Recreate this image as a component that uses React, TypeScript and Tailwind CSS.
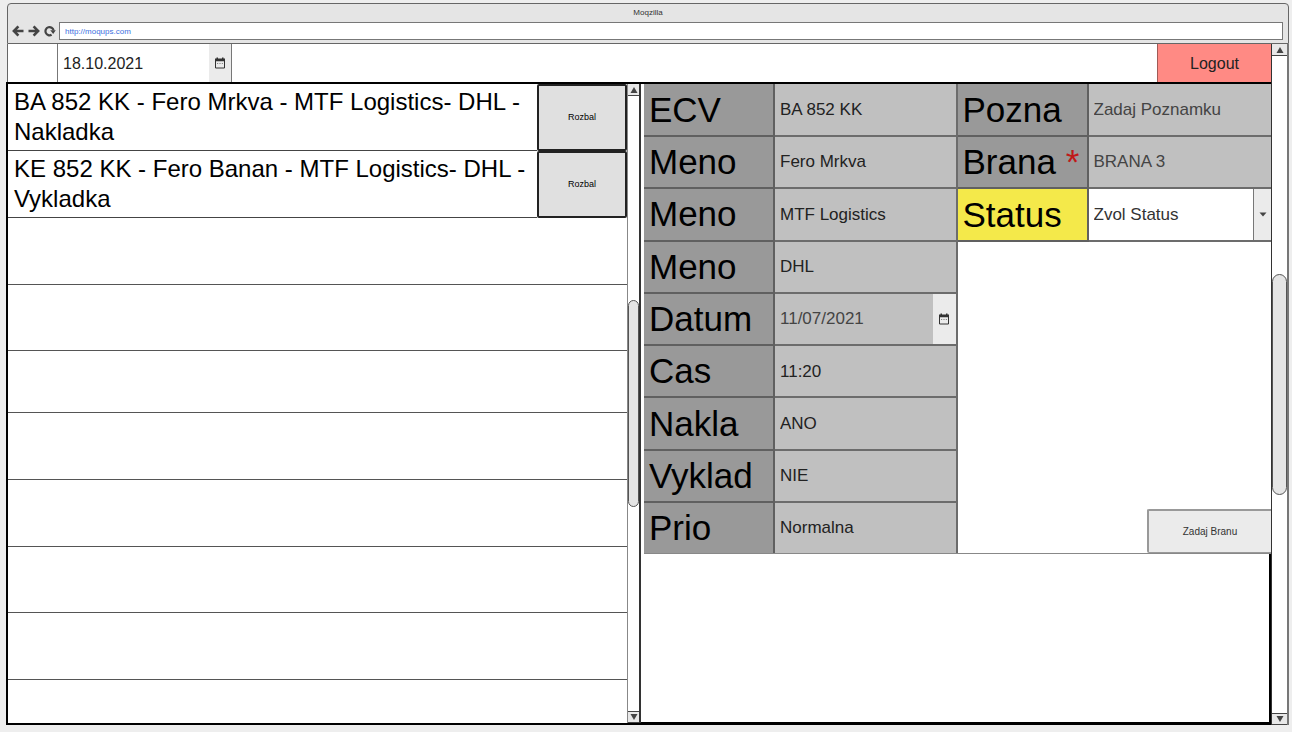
import { useState } from "react";

type IconProps = { className?: string };

function ArrowLeftIcon({ className }: IconProps) {
  return (
    <svg viewBox="0 0 12 12" className={className} fill="none" stroke="#444" strokeWidth="2.6" aria-hidden="true">
      <path d="M11.5 6H2.4M6.4 1.4L1.9 6l4.5 4.6" />
    </svg>
  );
}

function ArrowRightIcon({ className }: IconProps) {
  return (
    <svg viewBox="0 0 12 12" className={className} fill="none" stroke="#444" strokeWidth="2.6" aria-hidden="true">
      <path d="M0.5 6h9.1M5.6 1.4L10.1 6l-4.5 4.6" />
    </svg>
  );
}

function ReloadIcon({ className }: IconProps) {
  return (
    <svg viewBox="0 0 12 12" className={className} aria-hidden="true">
      <path d="M7.6 9.8A4.1 4.1 0 1 1 9.6 5.4" fill="none" stroke="#444" strokeWidth="2.2" />
      <path d="M11.8 5.2L9.2 9 6.2 5.2z" fill="#444" />
    </svg>
  );
}

function CalendarIcon({ className }: IconProps) {
  return (
    <svg viewBox="0 0 12 12" className={className} aria-hidden="true">
      <path d="M1.5 2.5h9v8.5h-9z" fill="none" stroke="#333" strokeWidth="1" />
      <path d="M1 1.5h10v2.7H1zM2.5 0.5H4V2H2.5zM8 0.5h1.5V2H8z" fill="#333" />
      <path d="M3 6h1.2v1H3zM5.4 6h1.2v1H5.4zM7.8 6H9v1H7.8z" fill="#888" />
    </svg>
  );
}

function Scrollbar({ label, className }: { label: string; className: string }) {
  return (
    <div className={`flex shrink-0 flex-col bg-white ${className}`}>
      <button aria-label={`${label} up`} className="flex h-3 items-center justify-center border-b border-[#444] bg-[#e8e8e8]">
        <svg viewBox="0 0 8 6" className="h-1.5 w-2" aria-hidden="true">
          <path d="M4 0l3.5 6h-7z" fill="#444" />
        </svg>
      </button>
      <div className="flex-1" />
      <div className="flex-1 rounded-full border border-[#555] bg-[#e5e5e5]" />
      <div className="flex-1" />
      <button aria-label={`${label} down`} className="flex h-3 items-center justify-center border-y border-[#444] bg-[#e8e8e8]">
        <svg viewBox="0 0 8 6" className="h-1.5 w-2" aria-hidden="true">
          <path d="M4 6L.5 0h7z" fill="#444" />
        </svg>
      </button>
    </div>
  );
}

const orders = [
  "BA 852 KK - Fero Mrkva - MTF Logistics- DHL - Nakladka",
  "KE 852 KK - Fero Banan - MTF Logistics- DHL - Vykladka",
];

const emptyRows = ["h-[67px]", "h-[66px]", "h-[62px]", "h-[67px]", "h-[67px]", "h-[66px]", "h-[67px]"];

const details = [
  { id: "ecv", label: "ECV", value: "BA 852 KK" },
  { id: "driver", label: "Meno", value: "Fero Mrkva" },
  { id: "carrier", label: "Meno", value: "MTF Logistics" },
  { id: "client", label: "Meno", value: "DHL" },
  { id: "date", label: "Datum", value: "11/07/2021", calendar: true },
  { id: "time", label: "Cas", value: "11:20" },
  { id: "loading", label: "Nakla", value: "ANO" },
  { id: "unloading", label: "Vyklad", value: "NIE" },
  { id: "priority", label: "Prio", value: "Normalna" },
];

const labelClass =
  "flex w-[131px] shrink-0 items-center overflow-hidden border-r-2 border-b-2 border-[#606060] pl-[5px] text-[35px] leading-10 whitespace-nowrap text-black";
const valueClass = "min-w-0 flex-1 bg-[#c0c0c0] pl-[5px] text-[17px] outline-none";

export default function App() {
  const [day, setDay] = useState("18.10.2021");
  const [status, setStatus] = useState("Zvol Status");
  const [note, setNote] = useState("");

  return (
    <div className="flex min-h-screen flex-col bg-[#eeeeee] pt-[3px] pr-[3px] pb-[7px] pl-[6px] font-['Liberation_Sans',Arial,sans-serif]">
      <header className="ml-px h-[41px] rounded-t-sm border border-[#666] bg-[#e5e5e5]">
        <h1 className="h-[18px] text-center text-[8px] leading-[18px] text-[#333]">Moqzilla</h1>
        <div className="flex items-center pr-[5px] pl-1">
          <nav className="flex w-[47px] gap-1">
            <button aria-label="Back"><ArrowLeftIcon className="size-3" /></button>
            <button aria-label="Forward"><ArrowRightIcon className="size-3" /></button>
            <button aria-label="Reload"><ReloadIcon className="size-3" /></button>
          </nav>
          <input
            aria-label="Address"
            defaultValue="http://moqups.com"
            className="h-[18px] min-w-0 flex-1 border border-[#777] bg-white px-[5px] text-[8px] text-[#3b6fe0] outline-none"
          />
        </div>
      </header>

      <div className="flex flex-1">
        <main className="flex min-w-0 flex-1 flex-col">
          <div className="ml-px flex h-[38px] justify-between border-l border-[#666] bg-white">
            <div className="ml-[49px] flex w-[175px] border-x border-[#777]">
              <input
                aria-label="Datum"
                value={day}
                onChange={(e) => setDay(e.target.value)}
                className="min-w-0 flex-1 pt-0.5 pl-[5px] text-base text-[#222] outline-none"
              />
              <button aria-label="Kalendar" className="flex w-[22px] items-center justify-center bg-[#ebebeb]">
                <CalendarIcon className="size-3" />
              </button>
            </div>
            <button className="w-[114px] border-l border-[#a05a56] bg-[#ff8a84] pt-0.5 text-base text-[#222]">
              Logout
            </button>
          </div>

          <div className="flex flex-1 border-2 border-r-0 border-black bg-white">
            <section className="flex min-w-0 flex-[632] border-r-2 border-[#333]">
              <ul className="min-w-0 flex-1">
                {orders.map((order) => (
                  <li key={order} className="flex h-[67px]">
                    <p className="min-w-0 flex-1 border-b border-[#444] pt-[3px] pl-1.5 text-2xl leading-[30px] text-black">{order}</p>
                    <button className="w-[90px] rounded-xs border-2 border-[#222] bg-[#e0e0e0] text-[9px] text-black">Rozbal</button>
                  </li>
                ))}
                {emptyRows.map((height, i) => (
                  <li key={i} className={`border-b border-[#555] ${height}`} />
                ))}
              </ul>
              <Scrollbar label="Orders" className="w-3 border-l border-[#888]" />
            </section>

            <section className="flex min-w-0 flex-[631] flex-col">
              <form
                className="ml-[3px] grid h-[470px] grid-cols-2 border-b border-[#888]"
                onSubmit={(e) => e.preventDefault()}
              >
                <div className="grid min-w-0 grid-rows-[53px_repeat(7,minmax(0,1fr))_50px]">
                  {details.map((d) => (
                    <div key={d.id} className="group flex min-h-0 min-w-0">
                      <label htmlFor={d.id} className={`${labelClass} bg-[#999999] group-last:border-b-0`}>{d.label}</label>
                      <div className="flex min-w-0 flex-1 border-r-2 border-b-2 border-[#6c6c6c] group-last:border-b-0">
                        <input id={d.id} readOnly value={d.value} className={`${valueClass} ${d.calendar ? "text-[#444]" : "text-[#222]"}`} />
                        {d.calendar && (
                          <button type="button" aria-label="Kalendar" className="flex w-[23px] items-center justify-center bg-[#ebebeb]">
                            <CalendarIcon className="size-3" />
                          </button>
                        )}
                      </div>
                    </div>
                  ))}
                </div>
                <div className="flex min-w-0 flex-col items-end justify-between">
                  <div className="w-full">
                    <div className="flex h-[53px]">
                      <label htmlFor="note" className={`${labelClass} bg-[#999999]`}>Pozna</label>
                      <div className="flex min-w-0 flex-1 border-b-2 border-[#6c6c6c]">
                        <input
                          id="note"
                          value={note}
                          onChange={(e) => setNote(e.target.value)}
                          placeholder="Zadaj Poznamku"
                          className={`${valueClass} placeholder:text-[#444]`}
                        />
                      </div>
                    </div>
                    <div className="flex h-[52px]">
                      <label htmlFor="gate" className={`${labelClass} bg-[#999999]`}>
                        <span className="whitespace-pre">Brana </span>
                        <span className="text-[#c01818]">*</span>
                      </label>
                      <div className="flex min-w-0 flex-1 border-b-2 border-[#6c6c6c]">
                        <input id="gate" defaultValue="BRANA 3" className={`${valueClass} text-[#444]`} />
                      </div>
                    </div>
                    <div className="flex h-[53px]">
                      <label htmlFor="status" className={`${labelClass} bg-[#f4e94a]`}>Status</label>
                      <div className="relative flex min-w-0 flex-1 border-b-2 border-[#6c6c6c]">
                        <select
                          id="status"
                          value={status}
                          onChange={(e) => setStatus(e.target.value)}
                          className="min-w-0 flex-1 appearance-none bg-white pl-[5px] text-[17px] text-[#333] outline-none"
                        >
                          <option>Zvol Status</option>
                        </select>
                        <span className="pointer-events-none absolute inset-y-0 right-0 flex w-[18px] items-center justify-center border-l border-[#777] bg-[#ebebeb]">
                          <svg viewBox="0 0 8 5" className="h-[5px] w-2" aria-hidden="true">
                            <path d="M.5 .5h7L4 4.5z" fill="#444" />
                          </svg>
                        </span>
                      </div>
                    </div>
                  </div>
                  <button type="submit" className="h-11 w-[124px] rounded-l-xs border-2 border-r-0 border-b border-[#999] bg-[#ebebeb] text-[10px] text-[#333]">
                    Zadaj Branu
                  </button>
                </div>
              </form>
              <div className="flex-1 border-r-2 border-b border-black" />
            </section>
          </div>
        </main>
        <Scrollbar label="Page" className="w-[18px] border-r-2 border-l border-r-[#777] border-l-[#333]" />
      </div>
    </div>
  );
}
